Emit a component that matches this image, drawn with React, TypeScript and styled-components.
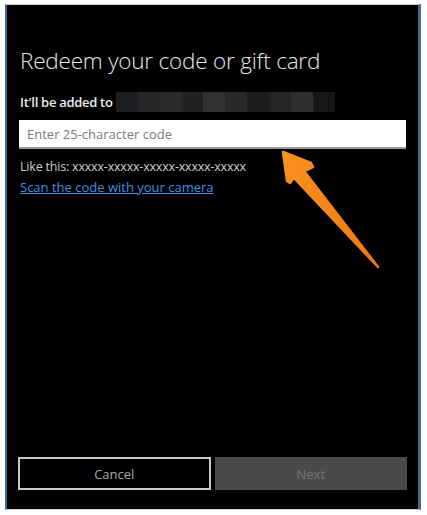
import styled, { createGlobalStyle } from "styled-components";

const GlobalStyle = createGlobalStyle`
  html, body {
    margin: 0;
    padding: 0;
    background: #ffffff;
  }
  body {
    font-family: "Open Sans", "Noto Sans", "Liberation Sans", sans-serif;
  }
`;

const Page = styled.div`
  width: 427px;
  height: 515px;
  padding: 4px 6px 5px 5px;
  box-sizing: border-box;
  position: relative;
`;

const Dialog = styled.div`
  height: 100%;
  box-sizing: border-box;
  background: #000000;
  border-left: 2px solid #3a6a9c;
  border-right: 3px solid #3a6a9c;
  border-top: 1px solid #c9d1da;
  border-bottom: 1px solid #d5dae0;
  display: flex;
  flex-direction: column;
  padding: 41px 11px 19px 13px;
`;

const Title = styled.h1`
  margin: 0;
  font-weight: 300;
  font-size: 22.5px;
  line-height: 30px;
  color: #e8e8e8;
  letter-spacing: -0.2px;
`;

const AddedRow = styled.div`
  display: flex;
  align-items: center;
  gap: 3px;
  margin-top: 16px;
`;

const Label = styled.span`
  font-size: 13px;
  font-weight: 600;
  color: #ececec;
  letter-spacing: -0.3px;
`;

const Redacted = styled.div`
  display: flex;
  height: 20px;
`;

const Tile = styled.div<{ $shade: string; $w: number }>`
  width: ${({ $w }) => $w}px;
  height: 100%;
  background: ${({ $shade }) => $shade};
`;

const CodeInput = styled.input`
  display: block;
  margin: 8px 0 0 -1px;
  width: 100%;
  height: 29px;
  box-sizing: border-box;
  border: none;
  border-bottom: 2px solid #9a9a9a;
  background: #ffffff;
  padding: 0 8px;
  font-family: inherit;
  font-size: 13px;
  color: #222;
  outline: none;

  &::placeholder {
    color: #7a7a7a;
  }
`;

const Hint = styled.div`
  margin-top: 9px;
  font-size: 12.5px;
  color: #cfcfcf;
  letter-spacing: -0.2px;

  span {
    font-size: 12.5px;
  }
`;

const ScanLink = styled.a`
  margin-top: 3px;
  font-size: 13px;
  color: #3d8fe0;
  text-decoration: underline;
  width: max-content;
`;

const Footer = styled.div`
  margin-top: auto;
  display: grid;
  grid-template-columns: 1fr 1fr;
  gap: 4px;
  margin-left: -2px;
`;

const ActionButton = styled.button<{ $primary?: boolean }>`
  height: 33px;
  box-sizing: border-box;
  font-family: inherit;
  font-size: 13px;
  border: ${({ $primary }) => ($primary ? "none" : "2px solid #c8c8c8")};
  background: ${({ $primary }) => ($primary ? "#4a4a4a" : "#000000")};
  color: ${({ $primary }) => ($primary ? "#767676" : "#a8a8a8")};
`;

const Arrow = styled.svg`
  position: absolute;
  left: 0;
  top: 0;
  pointer-events: none;
`;

const tiles: [string, number][] = [
  ["#1c1e22", 22],
  ["#262626", 22],
  ["#2b2b2b", 22],
  ["#222222", 21],
  ["#313131", 22],
  ["#292929", 22],
  ["#1f1d1b", 22],
  ["#252525", 22],
  ["#2f2f2f", 22],
  ["#171717", 22],
];

export default function App() {
  return (
    <Page>
      <GlobalStyle />
      <Dialog>
        <Title>Redeem your code or gift card</Title>
        <AddedRow>
          <Label>It'll be added to</Label>
          <Redacted>
            {tiles.map(([shade, w], i) => (
              <Tile key={i} $shade={shade} $w={w} />
            ))}
          </Redacted>
        </AddedRow>
        <CodeInput placeholder="Enter 25-character code" />
        <Hint>
          Like this: <span>xxxxx-xxxxx-xxxxx-xxxxx-xxxxx</span>
        </Hint>
        <ScanLink href="#">Scan the code with your camera</ScanLink>
        <Footer>
          <ActionButton>Cancel</ActionButton>
          <ActionButton $primary>Next</ActionButton>
        </Footer>
      </Dialog>
      <Arrow width="427" height="515" viewBox="0 0 427 515">
        <defs>
          <linearGradient id="orange" x1="0" y1="0" x2="1" y2="1">
            <stop offset="0" stopColor="#f9901f" />
            <stop offset="1" stopColor="#f07a12" />
          </linearGradient>
        </defs>
        <polygon
          points="283,152 311,163 313,167 304,171 378,267 294,178 290,183 287,181"
          fill="url(#orange)"
          stroke="url(#orange)"
          strokeWidth="2.5"
          strokeLinejoin="round"
        />
      </Arrow>
    </Page>
  );
}
